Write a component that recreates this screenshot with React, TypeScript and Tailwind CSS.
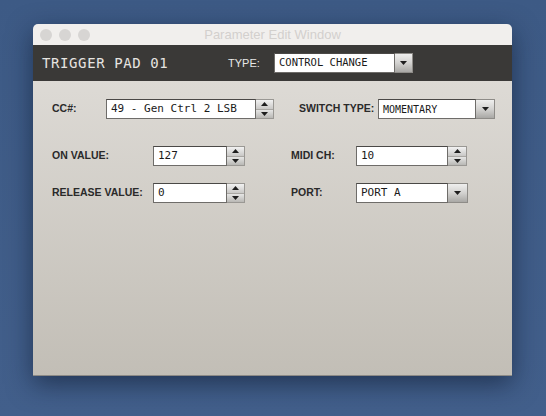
import React from 'react'

const mono = { fontFamily: '"DejaVu Sans Mono", "Liberation Mono", monospace' }
const sans = { fontFamily: '"Liberation Sans", Arial, sans-serif' }

function Arrow({ up }: { up?: boolean }) {
  return (
    <svg width="7" height="4" viewBox="0 0 7 4" className="block">
      <polygon points={up ? '0,4 7,4 3.5,0' : '0,0 7,0 3.5,4'} fill="#1e1e1e" />
    </svg>
  )
}

function Field({ value, width, size = 'text-[11px]' }: { value: string; width: string; size?: string }) {
  return (
    <div
      className={`${width} h-full bg-white border border-[#6e6c69] border-t-[#4a4846] flex items-center pl-[4px] ${size} text-[#1a1a1a] whitespace-pre`}
      style={mono}
    >
      {value}
    </div>
  )
}

function Spinner({ width }: { width: string }) {
  return (
    <div className={`${width} h-full flex flex-col border border-[#9a9894] border-l-0`}>
      <div className="flex-1 flex items-center justify-center bg-gradient-to-b from-[#f2f2f2] to-[#c9c8c6] border-b border-[#a9a7a3]">
        <Arrow up />
      </div>
      <div className="flex-1 flex items-center justify-center bg-gradient-to-b from-[#e6e6e5] to-[#b9b8b5]">
        <Arrow />
      </div>
    </div>
  )
}

function DropButton({ width }: { width: string }) {
  return (
    <div className={`${width} h-full flex items-center justify-center bg-gradient-to-b from-[#efefee] via-[#d3d2d0] to-[#a9a8a5] border border-[#8e8c88] border-l-0`}>
      <Arrow />
    </div>
  )
}

function Label({ text, width, className = '' }: { text: string; width: string; className?: string }) {
  return (
    <div className={`${width} ${className} shrink-0 text-[10.5px] font-bold text-[#2a2a2a] whitespace-nowrap`} style={sans}>
      {text}
    </div>
  )
}

export default function App() {
  return (
    <div className="w-[546px] h-[416px] bg-gradient-to-b from-[#3d5a85] to-[#425f8b] pl-[33px] pt-[24px] overflow-hidden">
      <div className="w-[479px] h-[352px] flex flex-col rounded-t-[5px] overflow-hidden shadow-[0_8px_26px_rgba(10,20,40,0.55)] border-b border-[#8c8a86]">
        {/* title bar */}
        <div className="h-[21px] shrink-0 relative flex items-center justify-center bg-[#f1efed]">
          <div className="absolute left-[7px] top-[5px] flex gap-[7px]">
            <div className="w-[12px] h-[12px] rounded-full bg-[#d7d5d3]" />
            <div className="w-[12px] h-[12px] rounded-full bg-[#d7d5d3]" />
            <div className="w-[12px] h-[12px] rounded-full bg-[#d7d5d3]" />
          </div>
          <span className="text-[13px] text-[#d3d0cd]" style={sans}>Parameter Edit Window</span>
        </div>

        {/* header */}
        <div className="h-[36px] shrink-0 flex items-center bg-[#3a3937] pl-[9px]">
          <div className="w-[186px] text-[14px] text-[#e6e4e0] tracking-[0.6px]" style={mono}>TRIGGER PAD 01</div>
          <div className="w-[46px] text-[11px] text-[#e8e8e8]" style={sans}>TYPE:</div>
          <div className="h-[20px] flex">
            <Field value="CONTROL CHANGE" width="w-[121px]" size="text-[10.5px]" />
            <DropButton width="w-[18px]" />
          </div>
        </div>

        {/* body */}
        <div className="flex-1 bg-gradient-to-b from-[#dddad5] to-[#c2beb6] pl-[19px] pt-[18px]">
          <div className="h-[20px] flex items-center">
            <Label text="CC#:" width="w-[54px]" />
            <Field value="49 - Gen Ctrl 2 LSB" width="w-[150px]" />
            <Spinner width="w-[18px]" />
            <Label text="SWITCH TYPE:" width="w-[79px]" className="ml-[25px]" />
            <Field value="MOMENTARY" width="w-[98px]" size="text-[10px]" />
            <DropButton width="w-[19px]" />
          </div>

          <div className="h-[20px] mt-[27px] flex items-center">
            <Label text="ON VALUE:" width="w-[101px]" />
            <Field value="127" width="w-[74px]" />
            <Spinner width="w-[18px]" />
            <Label text="MIDI CH:" width="w-[65px]" className="ml-[46px]" />
            <Field value="10" width="w-[92px]" />
            <Spinner width="w-[19px]" />
          </div>

          <div className="h-[20px] mt-[17px] flex items-center">
            <Label text="RELEASE VALUE:" width="w-[101px]" />
            <Field value="0" width="w-[74px]" />
            <Spinner width="w-[18px]" />
            <Label text="PORT:" width="w-[65px]" className="ml-[46px]" />
            <Field value="PORT A" width="w-[92px]" />
            <DropButton width="w-[20px]" />
          </div>
        </div>
      </div>
    </div>
  )
}
